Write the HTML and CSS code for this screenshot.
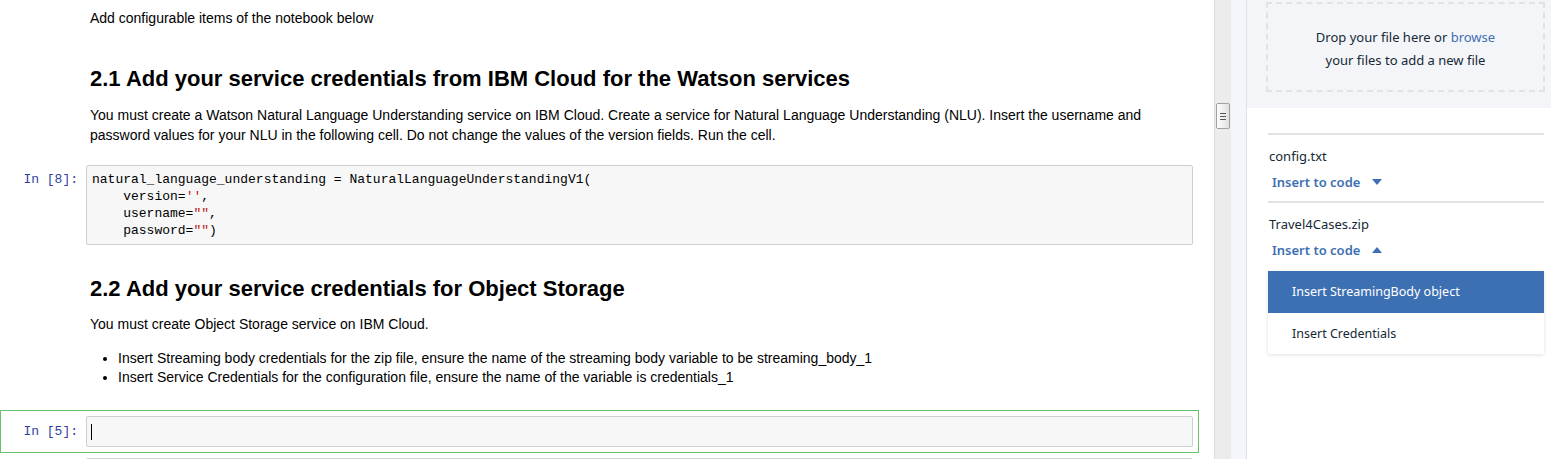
FILE: index.html
```html
<!DOCTYPE html>
<html>
<head>
<meta charset="utf-8">
<link rel="stylesheet" href="styles.css">
</head>
<body>
<div class="app">
  <div class="notebook">
    <div class="md first">Add configurable items of the notebook below</div>
    <h2 class="h2 h2a">2.1 Add your service credentials from IBM Cloud for the Watson services</h2>
    <div class="md para">You must create a Watson Natural Language Understanding service on IBM Cloud. Create a service for Natural Language Understanding (NLU). Insert the username and password values for your NLU in the following cell. Do not change the values of the version fields. Run the cell.</div>
    <div class="cell cell1">
      <div class="prompt">In&nbsp;[8]:</div>
      <div class="input"><div class="code"><div class="cl">natural_language_understanding = NaturalLanguageUnderstandingV1(</div><div class="cl">    version=<span class="s">''</span>,</div><div class="cl">    username=<span class="s">""</span>,</div><div class="cl">    password=<span class="s">""</span>)</div></div></div>
    </div>
    <h2 class="h2 h2b">2.2 Add your service credentials for Object Storage</h2>
    <div class="md para2">You must create Object Storage service on IBM Cloud.</div>
    <ul class="list">
      <li>Insert Streaming body credentials for the zip file, ensure the name of the streaming body variable to be streaming_body_1</li>
      <li>Insert Service Credentials for the configuration file, ensure the name of the variable is credentials_1</li>
    </ul>
    <div class="cell cell2 selected">
      <div class="prompt p2">In&nbsp;[5]:</div>
      <div class="input input2"><span class="cursor"></span></div>
    </div>
    <div class="cell cell3">
      <div class="prompt"></div>
      <div class="input input3"></div>
    </div>
  </div>
  <div class="scrolltrack">
    <div class="thumb"><span></span><span></span><span></span></div>
  </div>
  <div class="gutter"></div>
  <div class="panel">
    <div class="dropwrap">
      <div class="dropzone">
        <div>Drop your file here or <span class="link">browse</span></div>
        <div>your files to add a new file</div>
      </div>
    </div>
    <div class="files">
      <div class="file">
        <div class="fname">config.txt</div>
        <div class="insert">Insert to code <svg class="caret" width="10" height="6" viewBox="0 0 10 6"><path d="M0 0h10L5 6z" fill="#3d70b2"/></svg></div>
      </div>
      <div class="file">
        <div class="fname">Travel4Cases.zip</div>
        <div class="insert">Insert to code <svg class="caret" width="10" height="6" viewBox="0 0 10 6"><path d="M0 6h10L5 0z" fill="#3d70b2"/></svg></div>
        <div class="menu">
          <div class="mi active">Insert StreamingBody object</div>
          <div class="mi">Insert Credentials</div>
        </div>
      </div>
    </div>
  </div>
</div>
</body>
</html>
```
FILE: styles.css
```css
html, body { margin: 0; padding: 0; height: 100%; overflow: hidden; }
body { background: #fff; }
.app { display: flex; height: 459px; }
.notebook {
  width: 1214px; flex: none; overflow: hidden;
  font-family: "Liberation Sans", Arial, sans-serif; font-size: 14px; color: #000;
}
.md { padding-left: 90px; padding-right: 30px; line-height: 20px; }
.first { margin-top: 8px; }
.h2 { margin: 0; padding-left: 90px; font-size: 22px; line-height: 28px; font-weight: bold; }
.h2a { margin-top: 37px; }
.para { margin-top: 12px; }
.cell { display: flex; width: 1187px; border: 1px solid transparent; padding: 5px; }
.cell1 { margin-top: 14px; }
.selected { border-color: #6cbf6f; }
.prompt {
  width: 72px; flex: none; padding-right: 8px; text-align: right;
  font-family: "Liberation Mono", "Courier New", monospace; font-size: 13px;
  line-height: 17px; color: #303f9f; padding-top: 6px; white-space: nowrap;
}
.input {
  flex: 1; background: #f7f7f7; border: 1px solid #cfcfcf; border-radius: 2px;
  padding: 5px 5px;
}
.code {
  margin: 0; font-family: "Liberation Mono", "Courier New", monospace; font-size: 13px;
  color: #000;
}
.cl { height: 17px; line-height: 15px; padding-top: 1px; box-sizing: border-box; white-space: pre; }
.s { color: #ba2121; }
.h2b { margin-top: 24px; }
.para2 { margin-top: 11px; }
.list { margin: 15px 0 0 0; padding-left: 118px; line-height: 19px; }
.list li { padding-left: 0; }
.cell2 { margin-top: 23px; }
.p2 { padding-top: 7px; }
.input2 { height: 19px; padding: 5px 4px; }
.cursor { display: block; width: 1px; height: 16px; background: #000; margin-top: 2px; margin-left: 0; }
.cell3 { padding-top: 4px; padding-bottom: 0; }
.input3 { height: 30px; }

.scrolltrack {
  width: 16px; flex: none; background: #ececec; border-left: 1px solid #dcdcdc; position: relative;
}
.thumb {
  position: absolute; left: 1px; top: 103px; width: 12px; height: 24px;
  border: 1px solid #a0a0a0; border-radius: 2px;
  background: linear-gradient(to right, #fdfdfd, #e0e0e0);
  display: flex; flex-direction: column; align-items: center; justify-content: center; gap: 2px;
}
.thumb span { display: block; width: 6px; height: 1px; background: #555; }
.gutter { width: 15px; flex: none; background: #f4f6fb; border-right: 1px solid #dfe1e6; }
.panel {
  flex: 1; background: #fff;
  font-family: "Noto Sans", "Open Sans", sans-serif; font-size: 13px; color: #152935;
}
.dropwrap { background: #f4f5f9; height: 108px; padding: 2px 6px 0 19px; box-sizing: border-box; }
.dropzone {
  height: 90px; box-sizing: border-box; border: 2px dashed #dfe3e6;
  display: flex; flex-direction: column; align-items: center; justify-content: center;
  line-height: 23px; text-align: center; padding-top: 3px;
}
.link { color: #3d70b2; }
.files { padding: 25px 7px 0 21px; }
.file { border-top: 2px solid #dfe3e6; padding-top: 10px; padding-bottom: 9px; }
.fname { line-height: 22px; padding-left: 1px; }
.insert {
  color: #3d70b2; font-weight: 600; line-height: 22px; margin-top: 4px; padding-left: 4px;
  display: flex; align-items: center; gap: 12px;
}
.file:first-child .insert { margin-top: 4px; margin-bottom: -1px; }
.caret { display: block; }
.menu { margin-top: 10px; box-shadow: 0 1px 4px rgba(0,0,0,0.12); }
.mi { height: 41px; line-height: 41px; padding-left: 24px; color: #152935; font-size: 12.5px; }
.mi.active { background: #3d70b2; color: #fff; height: 42px; line-height: 42px; }
```
